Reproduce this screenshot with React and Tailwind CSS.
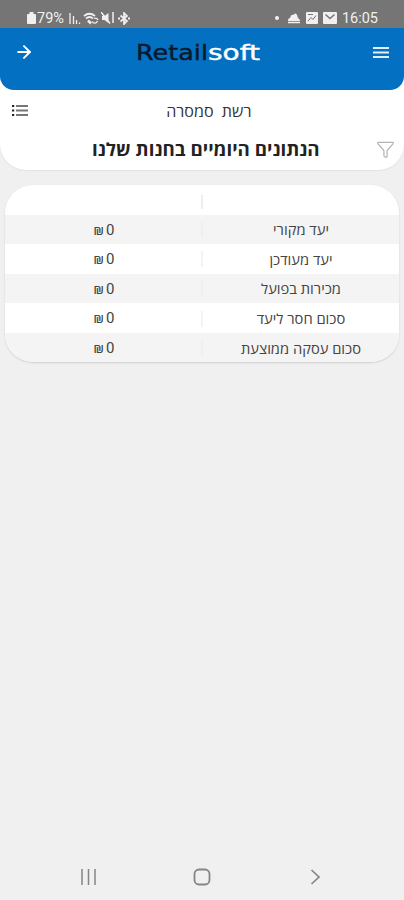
import { ArrowRight, Filter } from "lucide-react";

const rows = [
  { label: "יעד מקורי", value: 0 },
  { label: "יעד מעודכן", value: 0 },
  { label: "מכירות בפועל", value: 0 },
  { label: "סכום חסר ליעד", value: 0 },
  { label: "סכום עסקה ממוצעת", value: 0 },
];

function StatusBar() {
  return (
    <div dir="ltr" className="h-7 bg-[#757575] text-[#f0f0f0] flex items-start justify-between pt-2.5 pl-[27px] pr-[26px] font-[Roboto,sans-serif]">
      <div className="flex items-center h-4">
        <svg width="9" height="12" viewBox="0 0 9 12" fill="currentColor">
          <path d="M2.500 0h4v2H8q1 0 1 1v8q0 1-1 1H1q-1 0-1-1V3q0-1 1-1h1.500z" />
        </svg>
        <span className="text-[14.500px] leading-4 w-[28px] ml-px translate-y-px">79%</span>
        <svg className="ml-[4px]" width="12" height="12" viewBox="0 0 12 12" stroke="currentColor" strokeWidth="1.300">
          <path d="M1 1v11M4.500 4v8M7.500 8v4M10.500 10.500V12" />
        </svg>
        <svg className="ml-[2px]" width="17" height="13" viewBox="0 0 17 13" fill="none" stroke="currentColor" strokeWidth="1.700">
          <path d="M1 4Q6.500-.5 12 4M3 6.500Q6.500 3.500 10 6.500" />
          <path d="M5 8.500l3 3" strokeWidth="2.500" />
          <path d="M9 9.500a3 3 0 0 0 5.500-.5M15 8a3 3 0 0 0-4-1.500" strokeWidth="1.300" />
        </svg>
        <svg className="ml-px" width="13" height="12" viewBox="0 0 13 12" fill="currentColor">
          <path d="M1 4h2.500L7.500 1v10L3.500 8H1z" />
          <path d="M0 0l9 11.500M12 0v11" stroke="currentColor" strokeWidth="1.500" />
        </svg>
        <svg className="ml-[4px]" width="12" height="13" viewBox="0 0 12 13" fill="none" stroke="currentColor" strokeWidth="1.700">
          <path d="M2.500 3.500L9 9l-3 3V1l3 3-6.500 5.500" />
          <path d="M0 6.500h2M10 6.500h2" strokeWidth="1.800" />
        </svg>
      </div>
      <div className="flex items-center h-4">
        <span className="size-1 rounded-full bg-current" />
        <svg className="ml-[9px]" width="12" height="12" viewBox="0 0 12 12" fill="currentColor">
          <path d="M0 9q0-3 2-3 1-4 3-3 3-3 4 0l1 3q2 1 2 3z" />
          <path d="M0 10.500h12" stroke="currentColor" strokeWidth="1.500" />
        </svg>
        <svg className="ml-[6px]" width="12" height="12" viewBox="0 0 12 12">
          <rect width="12" height="12" rx="1" fill="currentColor" />
          <path d="M2 9l3-3.500L7 7.500 10 3.500M2 2.500h5" fill="none" stroke="#757575" />
        </svg>
        <svg className="ml-[5px]" width="14" height="12" viewBox="0 0 14 12">
          <rect width="14" height="12" rx="1" fill="currentColor" />
          <path d="M2.500 2.500L7 6.500l4.500-4" fill="none" stroke="#757575" strokeWidth="1.500" />
        </svg>
        <span className="text-[14.500px] leading-4 ml-[5px] translate-y-px">16:05</span>
      </div>
    </div>
  );
}

function Header() {
  return (
    <div dir="ltr" className="bg-white">
      <header className="h-[62px] bg-[#0370c2] rounded-b-[14px] grid grid-cols-[1fr_126px_1fr] items-start pt-3.5 pl-[14px] pr-[20px] text-white">
        <ArrowRight size={20} strokeWidth={2.4} />
        <svg width="126" height="24" viewBox="0 0 126 24" className="font-['DejaVu_Sans',sans-serif] overflow-visible">
          <text x="0" y="17.800" fontSize="21" textLength="72" lengthAdjust="spacingAndGlyphs" fill="#07192b" stroke="#07192b" strokeWidth="0.400">Retail</text>
          <text x="72" y="17.800" fontSize="21" textLength="52" lengthAdjust="spacingAndGlyphs" fill="#fff" stroke="#fff" strokeWidth="0.400">soft</text>
        </svg>
        <svg className="mt-[4px] ml-auto translate-x-[5px]" width="16" height="13" viewBox="0 0 16 13" stroke="#e2eefa" strokeWidth="2">
          <path d="M0 2h16M0 6.500h16M0 11h16" />
        </svg>
      </header>
    </div>
  );
}

function ListIcon() {
  return (
    <svg width="16" height="13" viewBox="0 0 16 13">
      <path d="M4 2h12M4 6.500h12M4 11h12" stroke="#777" strokeWidth="1.800" />
      <path d="M0 2h2.200M0 6.500h2.200M0 11h2.200" stroke="#222" strokeWidth="2.200" />
    </svg>
  );
}

function StoreTitle() {
  return (
    <section className="bg-white h-20 rounded-b-[26px] shadow-[0_1px_1px_#e2e2e2]">
      <div className="h-[42px] relative flex items-center justify-center pl-[14px]">
        <span className="text-[15px] text-[#333] scale-x-107">רשת&nbsp; סמסרה</span>
        <div className="absolute left-3 top-[14px]">
          <ListIcon />
        </div>
      </div>
      <div className="relative flex justify-center pl-1">
        <h1 className="text-[18px] leading-[34px] font-bold text-[#222] scale-x-104 translate-x-[1.500px]">הנתונים היומיים בחנות שלנו</h1>
        <Filter className="absolute right-[9px] top-[8px]" size={19} strokeWidth={1.5} color="#b0b5b5" />
      </div>
    </section>
  );
}

function DataTable() {
  return (
    <section className="ml-[5px] mr-[5px] mt-[15px] rounded-[28px] overflow-hidden bg-white shadow-[0_1px_2px_#cfcfcf]">
      <div className="h-[29.500px] flex items-center justify-center">
        <span className="w-px h-3.5 bg-[#dedede] mt-1 translate-x-[-0.500px]" />
      </div>
      {rows.map((row) => (
        <div key={row.label} className="h-[29.600px] flex items-center pt-px text-[14px] text-[#444] odd:bg-white even:bg-[#f4f4f4]">
          <div className="flex-1 text-center scale-x-105">{row.label}</div>
          <span className="w-px h-4 bg-[#e9e9e9] translate-x-[-0.500px]" />
          <div dir="ltr" className="flex-1 flex items-center justify-center gap-[3px] pl-px">
            <span className="text-[11px] font-semibold scale-x-110 translate-y-px">₪</span>
            <span className="font-[Roboto,sans-serif] text-[15px]">{row.value}</span>
          </div>
        </div>
      ))}
    </section>
  );
}

function NavBar() {
  return (
    <nav dir="ltr" className="mt-auto h-[46px] flex items-center justify-between pl-[81px] pr-[83px]">
      <svg width="15" height="16" viewBox="0 0 15 16" stroke="#858585" strokeWidth="1.500">
        <path d="M1 0v16M7.500 0v16M14 0v16" />
      </svg>
      <svg className="-translate-x-px" width="18" height="18" viewBox="0 0 18 18" fill="none" stroke="#858585" strokeWidth="1.800">
        <rect x="1.500" y="1.500" width="15" height="15" rx="4.500" />
      </svg>
      <svg width="11" height="16" viewBox="0 0 11 16" fill="none" stroke="#858585" strokeWidth="1.700">
        <path d="M1.500 1L9 8l-7.500 7" />
      </svg>
    </nav>
  );
}

export default function App() {
  return (
    <div dir="rtl" className="h-screen flex flex-col overflow-hidden bg-[#f0f0f0] font-['Open_Sans','Noto_Sans',sans-serif]">
      <StatusBar />
      <Header />
      <StoreTitle />
      <DataTable />
      <NavBar />
    </div>
  );
}
